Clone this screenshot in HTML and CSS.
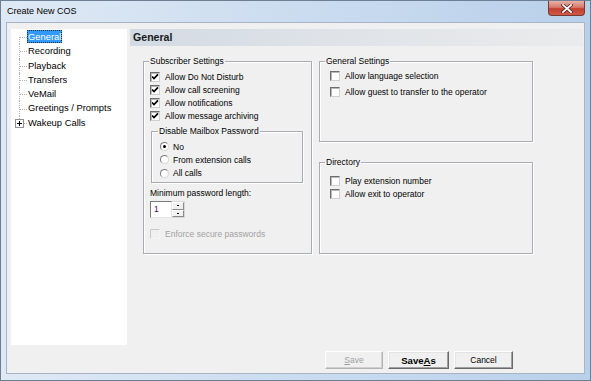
FILE: index.html
```html
<!DOCTYPE html>
<html lang="en">
<head>
  <meta charset="UTF-8" />
  <title>Create New COS</title>
  <link rel="stylesheet" href="styles.css">
</head>
<body>

  <!-- dialog window -->
  <div class="window">
    <div class="titlebar">
      <span class="title">Create New COS</span>
      <span class="close">
        <svg width="12" height="9" viewBox="0 0 12 9">
          <path d="M2 1 L10 8 M10 1 L2 8" stroke="#5a2020" stroke-width="3.4" stroke-linecap="square"/>
          <path d="M2 1 L10 8 M10 1 L2 8" stroke="#fff" stroke-width="1.8" stroke-linecap="square"/>
        </svg>
      </span>
    </div>

    <div class="client">
      <div class="main">

        <!-- left tree -->
        <div class="tree">
          <div class="node first"><span class="label selected">General</span></div>
          <div class="node"><span class="label">Recording</span></div>
          <div class="node"><span class="label">Playback</span></div>
          <div class="node"><span class="label">Transfers</span></div>
          <div class="node"><span class="label">VeMail</span></div>
          <div class="node"><span class="label">Greetings / Prompts</span></div>
          <div class="node last">
            <svg class="expander" width="9" height="9" viewBox="0 0 9 9">
              <rect x="0.5" y="0.5" width="8" height="8" fill="#fff" stroke="#919191"/>
              <path d="M2 4.5 H7 M4.5 2 V7" stroke="#000" stroke-width="1"/>
            </svg>
            <span class="label">Wakeup Calls</span>
          </div>
        </div>

        <!-- settings pane -->
        <div class="pane">
          <div class="pane-head">General</div>
          <div class="pane-body">

            <fieldset class="group subscriber">
              <legend>Subscriber Settings</legend>
              <div class="check"><span class="box on"></span>Allow Do Not Disturb</div>
              <div class="check"><span class="box on"></span>Allow call screening</div>
              <div class="check"><span class="box on"></span>Allow notifications</div>
              <div class="check"><span class="box on"></span>Allow message archiving</div>

              <fieldset class="group mailbox">
                <legend>Disable Mailbox Password</legend>
                <div class="radio"><span class="dot on"></span>No</div>
                <div class="radio"><span class="dot"></span>From extension calls</div>
                <div class="radio"><span class="dot"></span>All calls</div>
              </fieldset>

              <div class="min-label">Minimum password length:</div>
              <div class="spinner">
                <span class="spin-value">1</span>
                <span class="spin-buttons">
                  <span class="spin-btn"></span>
                  <span class="spin-btn"></span>
                </span>
              </div>

              <div class="check disabled enforce"><span class="box"></span>Enforce secure passwords</div>
            </fieldset>

            <div class="right-col">
              <fieldset class="group general">
                <legend>General Settings</legend>
                <div class="check"><span class="box"></span>Allow language selection</div>
                <div class="check"><span class="box"></span>Allow guest to transfer to the operator</div>
              </fieldset>

              <fieldset class="group directory">
                <legend>Directory</legend>
                <div class="check"><span class="box"></span>Play extension number</div>
                <div class="check"><span class="box"></span>Allow exit to operator</div>
              </fieldset>
            </div>

          </div>
        </div>
      </div>

      <!-- dialog buttons -->
      <div class="buttons">
        <button class="btn btn-save" disabled><u>S</u>ave</button>
        <button class="btn btn-saveas">Save<u>A</u>s</button>
        <button class="btn btn-cancel">Cancel</button>
      </div>
    </div>
  </div>

</body>
</html>
```

FILE: styles.css
```css
/* page */
html, body {
  margin: 0;
  padding: 0;
  background: #fff;
  font-family: "Liberation Sans", Arial, sans-serif;
  color: #000;
}

/* window frame */
.window {
  width: 591px;
  height: 381px;
  box-sizing: border-box;
  border: 1px solid #6f7f93;
  padding: 0 5px 6px 5px;
  background: linear-gradient(to right, #dfe9f5 0%, #c9dbef 55%, #b9d0ea 100%);
  display: flex;
  flex-direction: column;
}

.titlebar {
  height: 21px;
  display: flex;
  justify-content: space-between;
  align-items: flex-start;
  padding-left: 1px;
}

.title {
  font-size: 9px;
  line-height: 21px;
  color: #000;
}

.close {
  width: 37px;
  height: 15px;
  box-sizing: border-box;
  border: 1px solid #7a3a34;
  border-top: none;
  border-radius: 0 0 4px 4px;
  background: linear-gradient(to bottom, #e8b0a6 0%, #d77a6c 45%, #c2402f 55%, #cf5a48 100%);
  display: flex;
  align-items: center;
  justify-content: center;
}

/* client area */
.client {
  flex: 1;
  background: #f0f0f0;
  border: 1px solid #a6b4c6;
  display: flex;
  flex-direction: column;
}

.main {
  display: flex;
  gap: 3px;
  padding: 6px 1px 0 4px;
}

/* tree */
.tree {
  width: 116px;
  height: 316px;
  background: #fff;
  padding-top: 1px;
  box-sizing: border-box;
  font-size: 9.4px;
}

.node {
  position: relative;
  height: 14.3px;
  line-height: 14.3px;
  padding-left: 17px;
  white-space: nowrap;
}

.node::before {
  content: "";
  position: absolute;
  left: 8px;
  top: 0;
  bottom: 0;
  border-left: 1px dotted #b0b0b0;
}

.node.first::before {
  top: 50%;
}

.node.last::before {
  bottom: 50%;
}

.node::after {
  content: "";
  position: absolute;
  left: 9px;
  width: 7px;
  top: 50%;
  border-top: 1px dotted #b0b0b0;
}

.expander {
  position: absolute;
  left: 4px;
  top: 3px;
  z-index: 1;
}

.label {
  display: inline-block;
  padding: 0 1px;
  margin-left: -1px;
  line-height: 13px;
}

.label.selected {
  background: #3399ff;
  color: #fff;
  outline: 1px dotted #1a2f4a;
  outline-offset: -1px;
}

/* right pane */
.pane {
  flex: 1;
}

.pane-head {
  height: 17px;
  line-height: 17px;
  padding-left: 3px;
  font-size: 10.6px;
  font-weight: bold;
  color: #1a1a1a;
  background: linear-gradient(to right, #d2dae3 0%, #dfe3e8 45%, #eaebec 100%);
}

.pane-body {
  display: flex;
  gap: 7px;
  padding: 10px 0 0 13px;
  font-size: 8.5px;
}

/* group boxes */
.group {
  margin: 0;
  box-sizing: border-box;
  border: 1px solid #a9acb0;
  box-shadow: inset 1px 1px 0 #fff, 1px 1px 0 #fff;
  min-width: 0;
}

.group legend {
  font-size: 8.5px;
  line-height: 11px;
  padding: 0 1px;
  margin-left: -1px;
}

.subscriber {
  width: 169px;
  height: 198px;
  padding: 3px 6px 0 6px;
}

.mailbox {
  width: 152px;
  height: 57px;
  margin: 4px 0 0 1px;
  padding: 3px 8px 0 8px;
}

.mailbox legend {
  margin-left: -2px;
}

.right-col {
  display: flex;
  flex-direction: column;
  gap: 15px;
}

.general {
  width: 214px;
  height: 86px;
  padding: 2px 10px 0 10px;
}

.general .check + .check {
  margin-top: 3px;
}

.general legend,
.directory legend {
  margin-left: -5px;
}

.directory {
  width: 214px;
  height: 97px;
  padding: 6px 10px 0 10px;
}

/* checkboxes */
.check {
  display: flex;
  align-items: center;
  height: 13px;
  white-space: nowrap;
}

.box {
  width: 10px;
  height: 10px;
  box-sizing: border-box;
  margin-right: 5px;
  border: 1px solid;
  border-color: #6e6e6e #d0d0d0 #d0d0d0 #6e6e6e;
  box-shadow: inset 1px 1px 0 #b8b8b8;
  background: #fff;
  flex: none;
}

.box.on {
  background: #fff url("data:image/svg+xml,%3Csvg xmlns='http://www.w3.org/2000/svg' width='8' height='8'%3E%3Cpath d='M1 3.5 L3 5.6 L7 1.4' fill='none' stroke='%23000' stroke-width='1.7'/%3E%3C/svg%3E") center / 8px 8px no-repeat;
}

.check.disabled {
  color: #a3a3a3;
}

.check.disabled .box {
  border-color: #c8c8c8 #f4f4f4 #f4f4f4 #c8c8c8;
  box-shadow: none;
  background: #f0f0f0;
}

/* radio buttons */
.radio {
  display: flex;
  align-items: center;
  height: 13.3px;
  white-space: nowrap;
}

.dot {
  width: 9px;
  height: 9px;
  box-sizing: border-box;
  border-radius: 50%;
  border: 1px solid;
  border-color: #7a7a7a #d6d6d6 #d6d6d6 #7a7a7a;
  background: #fff;
  margin-right: 4px;
  flex: none;
  position: relative;
}

.dot.on::after {
  content: "";
  position: absolute;
  left: 2px;
  top: 2px;
  width: 3px;
  height: 3px;
  border-radius: 50%;
  background: #000;
}

/* password length */
.min-label {
  margin-top: 5px;
  line-height: 11px;
}

.spinner {
  display: flex;
  width: 35px;
  height: 17px;
  margin-top: 2px;
}

.spin-value {
  width: 22px;
  box-sizing: border-box;
  background: #fff;
  border: 1px solid;
  border-color: #7a7a7a #e4e4e4 #e4e4e4 #7a7a7a;
  padding-left: 3px;
  line-height: 14px;
  color: #4b0a4b;
}

.spin-buttons {
  display: flex;
  flex-direction: column;
  width: 13px;
  border: 1px solid #d8d8d8;
  border-left: none;
  box-sizing: border-box;
}

.spin-btn {
  flex: 1;
  position: relative;
  background: #f0f0f0;
  border: 1px solid;
  border-color: #fff #8a8a8a #8a8a8a #fff;
}

.spin-btn::after {
  content: "";
  position: absolute;
  left: 4px;
  top: 2px;
  width: 2px;
  height: 1px;
  background: #000;
}

.enforce {
  margin-top: 9px;
}

/* dialog buttons */
.buttons {
  display: flex;
  justify-content: flex-end;
  gap: 5px;
  padding-right: 71px;
  margin-top: 6px;
}

.btn {
  height: 18px;
  box-sizing: border-box;
  font-family: "Liberation Sans", Arial, sans-serif;
  font-size: 8.5px;
  padding: 0;
  background: #f0f0f0;
  color: #000;
  border: 1px solid;
  border-color: #fff #696969 #696969 #fff;
  box-shadow: inset -1px -1px 0 #a0a0a0, inset 1px 1px 0 #e3e3e3;
}

.btn-save {
  width: 58px;
  color: #a0a0a0;
  border-color: #fff #b4b4b4 #b4b4b4 #fff;
  box-shadow: inset -1px -1px 0 #d0d0d0;
}

.btn-saveas {
  width: 61px;
  font-size: 9.6px;
  font-weight: bold;
}

.btn-cancel {
  width: 59px;
}
```
